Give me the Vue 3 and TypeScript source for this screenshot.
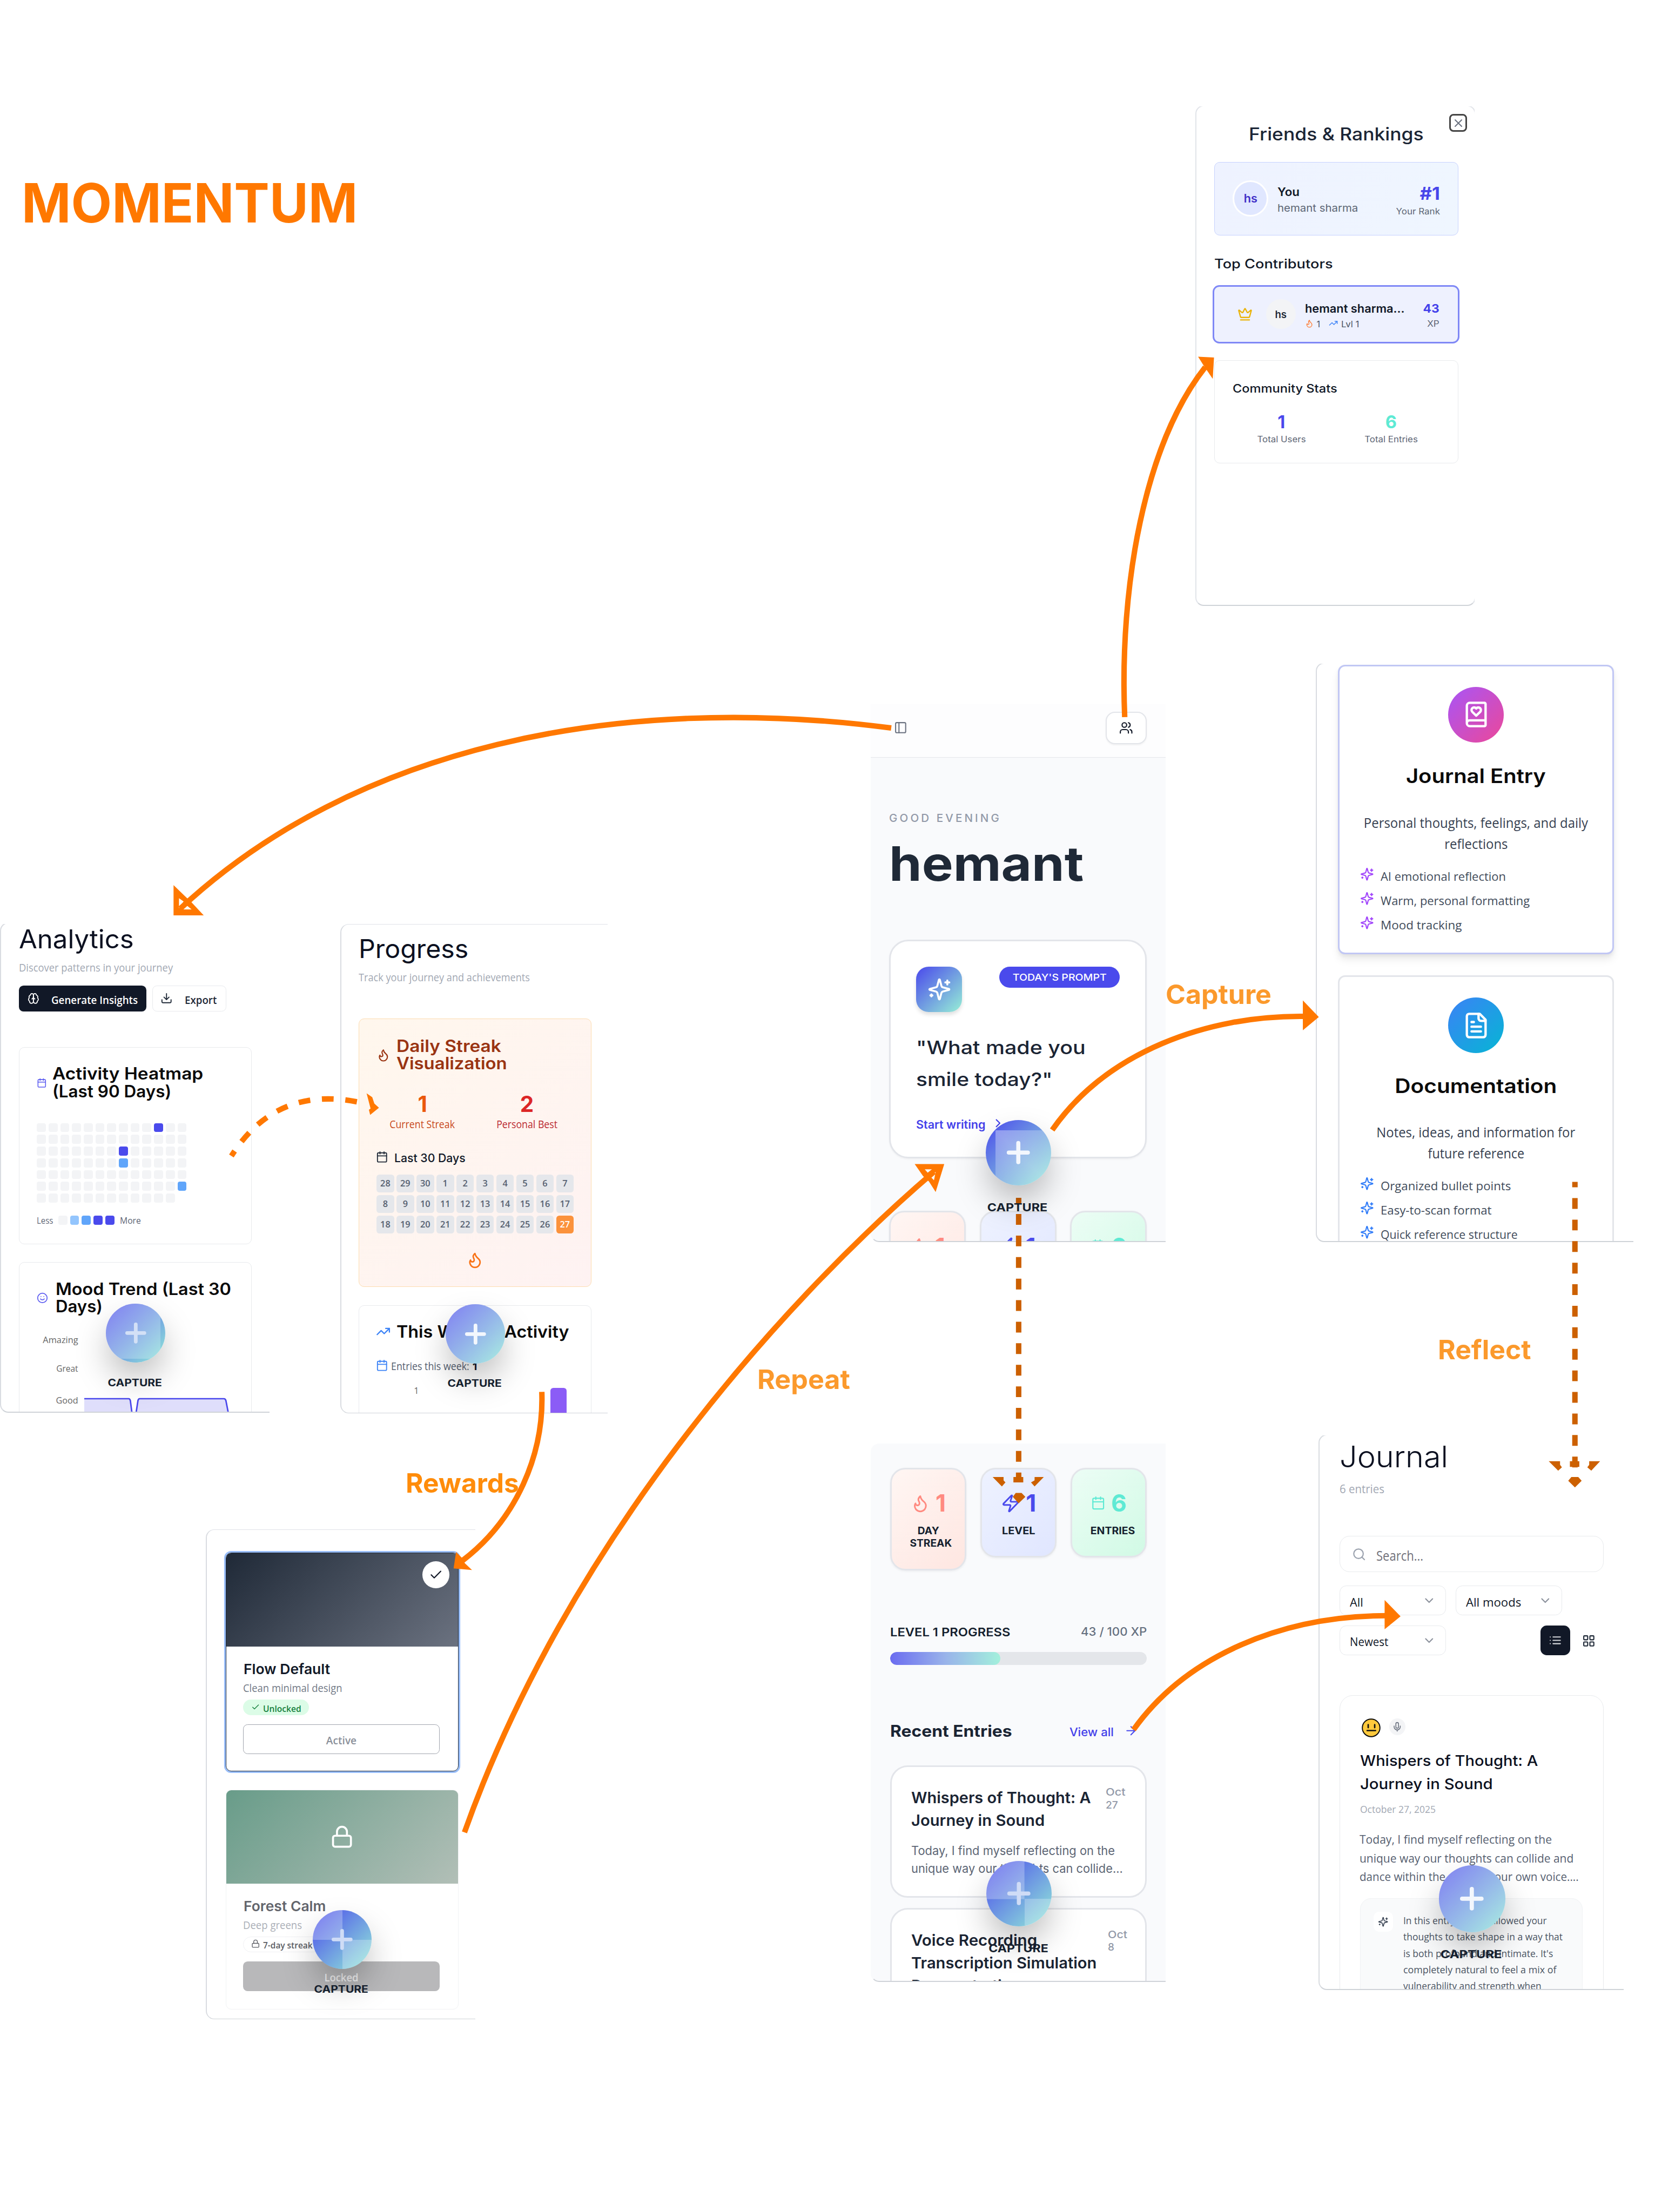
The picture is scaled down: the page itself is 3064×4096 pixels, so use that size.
<script setup lang="ts">
import { h } from 'vue'
import type { Directive } from 'vue'

/* Stroke icons on a 24 x 24 grid */
const glyphs: Record<string, string> = {
  sparkles:
    '<path d="M9.937 15.5A2 2 0 0 0 8.5 14.063l-6.135-1.582a.5.5 0 0 1 0-.962L8.5 9.936A2 2 0 0 0 9.937 8.5l1.582-6.135a.5.5 0 0 1 .963 0L14.063 8.5A2 2 0 0 0 15.5 9.937l6.135 1.581a.5.5 0 0 1 0 .964L15.5 14.063a2 2 0 0 0-1.437 1.437l-1.582 6.135a.5.5 0 0 1-.963 0z"/><path d="M20 3v4M22 5h-4M4 17v2M5 18H3"/>',
  flame:
    '<path d="M8.5 14.5A2.5 2.5 0 0 0 11 12c0-1.38-.5-2-1-3-1.072-2.143-.224-4.054 2-6 .5 2.5 2 4.9 4 6.5 2 1.6 3 3.5 3 5.5a7 7 0 1 1-14 0c0-1.153.433-2.294 1-3a2.5 2.5 0 0 0 2.5 2.5z"/>',
  zap: '<path d="M4 14a1 1 0 0 1-.78-1.63l9.9-10.2a.5.5 0 0 1 .86.46l-1.92 6.02A1 1 0 0 0 13 10h7a1 1 0 0 1 .78 1.63l-9.9 10.2a.5.5 0 0 1-.86-.46l1.92-6.02A1 1 0 0 0 11 14z"/>',
  calendar: '<path d="M8 2v4M16 2v4M3 10h18"/><rect x="3" y="4" width="18" height="18" rx="2"/>',
  users:
    '<path d="M16 21v-2a4 4 0 0 0-4-4H6a4 4 0 0 0-4 4v2"/><circle cx="9" cy="7" r="4"/><path d="M22 21v-2a4 4 0 0 0-3-3.87M16 3.13a4 4 0 0 1 0 7.75"/>',
  panel: '<rect x="3" y="3" width="18" height="18" rx="2"/><path d="M9 3v18"/>',
  crown:
    '<path d="M11.562 3.266a.5.5 0 0 1 .876 0L15.39 8.87a1 1 0 0 0 1.516.294L21.183 5.5a.5.5 0 0 1 .798.519l-2.834 10.246a1 1 0 0 1-.956.734H5.81a1 1 0 0 1-.957-.734L2.02 6.02a.5.5 0 0 1 .798-.519l4.276 3.664a1 1 0 0 0 1.516-.294z"/><path d="M5 21h14"/>',
  trend: '<path d="M22 7l-8.500 8.500-5-5L2 17"/><path d="M16 7h6v6"/>',
  brain:
    '<path d="M12 5a3 3 0 1 0-5.997.125 4 4 0 0 0-2.526 5.77 4 4 0 0 0 .556 6.588A4 4 0 1 0 12 18Z"/><path d="M12 5a3 3 0 1 1 5.997.125 4 4 0 0 1 2.526 5.77 4 4 0 0 1-.556 6.588A4 4 0 1 1 12 18Z"/><path d="M15 13a4.500 4.500 0 0 1-3-4 4.500 4.500 0 0 1-3 4"/>',
  download: '<path d="M21 15v4a2 2 0 0 1-2 2H5a2 2 0 0 1-2-2v-4"/><path d="m7 10 5 5 5-5M12 15V3"/>',
  smile: '<circle cx="12" cy="12" r="10"/><path d="M8 14s1.500 2 4 2 4-2 4-2M9 9h.01M15 9h.01"/>',
  lock: '<rect x="3" y="11" width="18" height="11" rx="2"/><path d="M7 11V7a5 5 0 0 1 10 0v4"/>',
  check: '<path d="M20 6 9 17l-5-5"/>',
  book: '<path d="M16 8.200A2.220 2.220 0 0 0 13.800 6c-.8 0-1.400.3-1.800.9-.4-.6-1-.9-1.800-.9A2.220 2.220 0 0 0 8 8.200c0 .6.3 1.200.7 1.600A226.652 226.652 0 0 0 12 13a404 404 0 0 0 3.300-3.100 2.413 2.413 0 0 0 .7-1.700"/><path d="M4 19.500v-15A2.500 2.500 0 0 1 6.500 2H19a1 1 0 0 1 1 1v18a1 1 0 0 1-1 1H6.500a1 1 0 0 1 0-5H20"/>',
  file: '<path d="M15 2H6a2 2 0 0 0-2 2v16a2 2 0 0 0 2 2h12a2 2 0 0 0 2-2V7Z"/><path d="M14 2v4a2 2 0 0 0 2 2h4M10 9H8M16 13H8M16 17H8"/>',
  search: '<circle cx="11" cy="11" r="8"/><path d="m21 21-4.300-4.300"/>',
  down: '<path d="m6 9 6 6 6-6"/>',
  right: '<path d="m9 18 6-6-6-6"/>',
  arrow: '<path d="M5 12h14M12 5l7 7-7 7"/>',
  list: '<path d="M3 12h.01M3 18h.01M3 6h.01M8 12h13M8 18h13M8 6h13"/>',
  grid: '<rect x="3" y="3" width="7" height="7" rx="1"/><rect x="14" y="3" width="7" height="7" rx="1"/><rect x="14" y="14" width="7" height="7" rx="1"/><rect x="3" y="14" width="7" height="7" rx="1"/>',
  mic: '<path d="M12 2a3 3 0 0 0-3 3v7a3 3 0 0 0 6 0V5a3 3 0 0 0-3-3Z"/><path d="M19 10v2a7 7 0 0 1-14 0v-2M12 19v3"/>',
  close: '<path d="M18 6 6 18M6 6l12 12"/>',
  plus: '<path d="M5 12h14M12 5v14"/>',
}

const Icon = (p: { n: string }) => h('svg', { class: 'icon', viewBox: '0 0 24 24', innerHTML: glyphs[p.n] })
Icon.props = ['n']

/* Stretches a single line of text to the given width; .track spreads the letters instead */
const pen = document.createElement('canvas').getContext('2d')!
const vFit: Directive<HTMLElement, number> = {
  mounted(el, { value, modifiers }) {
    const cs = getComputedStyle(el)
    const text = (el.textContent ?? '').trim()
    const size = parseFloat(cs.fontSize)
    pen.font = `${cs.fontWeight} ${size}px ${cs.fontFamily}`
    const natural = pen.measureText(text).width
    const target = value + size * 0.1
    if ((modifiers as Record<string, boolean>).track) el.style.letterSpacing = `${(target - natural) / (text.length - 1)}px`
    else el.style.transform = `scaleX(${target / natural})`
  },
}

const stats = [
  { kind: 'streak', icon: 'flame', value: '1', label: [['DAY', 49], ['STREAK', 98]] },
  { kind: 'level', icon: 'zap', value: '1', label: [['LEVEL', 77]] },
  { kind: 'entries', icon: 'calendar', value: '6', label: [['ENTRIES', 104]] },
] as { kind: string; icon: string; value: string; label: [string, number][] }[]

const heat = Array.from({ length: 7 * 13 - 1 }, (_, i) => {
  const row = Math.floor(i / 13)
  const col = i % 13
  if ((row === 0 && col === 10) || (row === 2 && col === 7)) return 'h4'
  if ((row === 3 && col === 7) || (row === 5 && col === 12)) return 'h2'
  return 'h0'
})

const days = [28, 29, 30, ...Array.from({ length: 27 }, (_, i) => i + 1)]

const kinds = [
  {
    id: 'journal', icon: 'book', title: 'Journal Entry', tw: 329,
    text: [['Personal thoughts, feelings, and daily', 532], ['reflections', 148]] as [string, number][],
    items: [['AI emotional reflection', 296], ['Warm, personal formatting', 353], ['Mood tracking', 191]] as [string, number][],
  },
  {
    id: 'docs', icon: 'file', title: 'Documentation', tw: 382,
    text: [['Notes, ideas, and information for', 471], ['future reference', 227]] as [string, number][],
    items: [['Organized bullet points', 308], ['Easy-to-scan format', 262], ['Quick reference structure', 324]] as [string, number][],
  },
]
</script>

<template>
  <div class="stage">
    <h1 class="tx label momentum" v-fit="789">MOMENTUM</h1>

    <!-- Friends & Rankings -->
    <section class="panel friends">
      <button class="close"><Icon n="close" /></button>
      <h2 class="tx c f-title" v-fit="413">Friends &amp; Rankings</h2>
      <div class="you row">
        <span class="avatar big">hs</span>
        <div class="col you-name">
          <p class="tx y1" v-fit="50">You</p>
          <p class="tx y2" v-fit="190">hemant sharma</p>
        </div>
        <div class="col you-rank">
          <p class="tx r y3" v-fit="44">#1</p>
          <p class="tx r y4" v-fit="103">Your Rank</p>
        </div>
      </div>
      <h3 class="tx f-top" v-fit="280">Top Contributors</h3>
      <div class="leader row">
        <Icon n="crown" class="crown" />
        <span class="avatar small">hs</span>
        <div class="col l-name">
          <p class="tx l1" v-fit="235">hemant sharma...</p>
          <div class="row">
            <Icon n="flame" class="l-flame" /><p class="tx l2 l-num">1</p>
            <Icon n="trend" class="l-trend" /><p class="tx l2" v-fit="41">Lvl 1</p>
          </div>
        </div>
        <div class="col l-xp">
          <p class="tx r l3" v-fit="36">43</p>
          <p class="tx r l4" v-fit="27">XP</p>
        </div>
      </div>
      <div class="community col">
        <h3 class="tx cm-title" v-fit="247">Community Stats</h3>
        <div class="cm row">
          <div class="col"><p class="tx c cm-num">1</p><p class="tx c cm-lab" v-fit="114">Total Users</p></div>
          <div class="col"><p class="tx c cm-num teal">6</p><p class="tx c cm-lab" v-fit="125">Total Entries</p></div>
        </div>
      </div>
    </section>

    <!-- Home, top of the page -->
    <section class="panel home home-a">
      <header class="bar row">
        <Icon n="panel" class="toggle" />
        <button class="people"><Icon n="users" /></button>
      </header>
      <p class="tx greet" v-fit.track="260">GOOD EVENING</p>
      <h1 class="tx name" v-fit="453">hemant</h1>
      <div class="prompt col">
        <div class="row">
          <span class="tile"><Icon n="sparkles" /></span>
          <span class="today"><span class="tx c" v-fit="222">TODAY'S PROMPT</span></span>
        </div>
        <p class="tx q q1" v-fit="400">"What made you</p>
        <p class="tx q q2" v-fit="321">smile today?"</p>
        <div class="row">
          <p class="tx start" v-fit="163">Start writing</p>
          <Icon n="right" class="go" />
        </div>
      </div>
      <div class="stats row">
        <div v-for="s in stats" :key="s.kind" class="stat col" :class="s.kind">
          <div class="row head"><Icon :n="s.icon" /><p class="tx num">{{ s.value }}</p></div>
          <p v-for="l in s.label" :key="l[0]" class="tx c lab" v-fit="l[1]">{{ l[0] }}</p>
        </div>
      </div>
      <div class="fab fab-a"><span class="disc"><Icon n="plus" /></span><p class="tx c" v-fit="141">CAPTURE</p></div>
    </section>

    <!-- Home, scrolled down -->
    <section class="panel home home-b">
      <div class="stats row">
        <div v-for="s in stats" :key="s.kind" class="stat col" :class="s.kind">
          <div class="row head"><Icon :n="s.icon" /><p class="tx num">{{ s.value }}</p></div>
          <p v-for="l in s.label" :key="l[0]" class="tx c lab" v-fit="l[1]">{{ l[0] }}</p>
        </div>
      </div>
      <div class="row between">
        <p class="tx lp" v-fit="284">LEVEL 1 PROGRESS</p>
        <p class="tx r xp" v-fit="155">43 / 100 XP</p>
      </div>
      <div class="meter"><span></span></div>
      <div class="row">
        <h2 class="tx recent" v-fit="287">Recent Entries</h2>
        <p class="tx r viewall" v-fit="103">View all</p>
        <Icon n="arrow" class="va-arrow" />
      </div>
      <article class="entry col e1">
        <div class="row">
          <div class="col e-title">
            <p class="tx et et1" v-fit="425">Whispers of Thought: A</p>
            <p class="tx et et2" v-fit="315">Journey in Sound</p>
          </div>
          <div class="col"><p class="tx ed ed1" v-fit="45">Oct</p><p class="tx ed ed2" v-fit="27">27</p></div>
        </div>
        <p class="tx eb eb1" v-fit="483">Today, I find myself reflecting on the</p>
        <p class="tx eb eb2" v-fit="502">unique way our thoughts can collide...</p>
      </article>
      <article class="entry col e2">
        <div class="row">
          <div class="col e-title">
            <p class="tx et et1" v-fit="297">Voice Recording</p>
            <p class="tx et et2" v-fit="439">Transcription Simulation</p>
            <p class="tx et et2" v-fit="257">Demonstration</p>
          </div>
          <div class="col"><p class="tx ed ed1" v-fit="44">Oct</p><p class="tx ed ed2">8</p></div>
        </div>
      </article>
      <div class="fab fab-b"><span class="disc"><Icon n="plus" /></span><p class="tx c" v-fit="140">CAPTURE</p></div>
    </section>

    <!-- Entry type picker -->
    <section class="panel kinds">
      <article v-for="k in kinds" :key="k.id" class="kind col" :class="k.id">
        <span class="round"><Icon :n="k.icon" /></span>
        <h2 class="tx c k-title" v-fit="k.tw">{{ k.title }}</h2>
        <p v-for="t in k.text" :key="t[0]" class="tx c k-text" v-fit="t[1]">{{ t[0] }}</p>
        <ul>
          <li v-for="t in k.items" :key="t[0]" class="row"><Icon n="sparkles" /><p class="tx" v-fit="t[1]">{{ t[0] }}</p></li>
        </ul>
      </article>
    </section>

    <!-- Analytics -->
    <section class="panel analytics">
      <h1 class="tx page-title" v-fit="268">Analytics</h1>
      <p class="tx page-sub" v-fit="365">Discover patterns in your journey</p>
      <div class="row actions">
        <button class="row gen"><Icon n="brain" /><span class="tx" v-fit="204">Generate Insights</span></button>
        <button class="row exp"><Icon n="download" /><span class="tx" v-fit="74">Export</span></button>
      </div>
      <div class="card heat col">
        <div class="row">
          <Icon n="calendar" class="cal" />
          <div class="col">
            <h2 class="tx ct ct1" v-fit="356">Activity Heatmap</h2>
            <h2 class="tx ct ct2" v-fit="280">(Last 90 Days)</h2>
          </div>
        </div>
        <div class="cells"><i v-for="(c, i) in heat" :key="i" :class="c"></i></div>
        <div class="row legend">
          <p class="tx less" v-fit="37">Less</p>
          <i class="h0"></i><i class="h1"></i><i class="h2"></i><i class="h4"></i><i class="h4"></i>
          <p class="tx more" v-fit="48">More</p>
        </div>
      </div>
      <div class="card mood col">
        <div class="row">
          <Icon n="smile" class="face" />
          <div class="col">
            <h2 class="tx ct ct1" v-fit="415">Mood Trend (Last 30</h2>
            <h2 class="tx ct ct2" v-fit="108">Days)</h2>
          </div>
        </div>
        <div class="row">
          <div class="col axis">
            <p class="tx r ax1" v-fit="82">Amazing</p>
            <p class="tx r ax2" v-fit="50">Great</p>
            <p class="tx r ax3" v-fit="51">Good</p>
          </div>
          <svg class="area" viewBox="0 0 350 60">
            <path d="M0 9H106Q109 9 110 14L116 60H0Z M121 60L128 14Q129 9 132 9H333Q337 9 338 14L347 60Z" class="fill" />
            <path d="M0 9H106Q109 9 110 14L116 60M121 60L128 14Q129 9 132 9H333Q337 9 338 14L347 60" class="line" />
          </svg>
        </div>
      </div>
      <div class="fab fab-d"><span class="disc"><Icon n="plus" /></span><p class="tx c" v-fit="127">CAPTURE</p></div>
    </section>

    <!-- Progress -->
    <section class="panel progress">
      <h1 class="tx page-title" v-fit="256">Progress</h1>
      <p class="tx page-sub" v-fit="406">Track your journey and achievements</p>
      <div class="card streak-card col">
        <div class="row">
          <Icon n="flame" class="sf" />
          <div class="col">
            <h2 class="tx ct ct1" v-fit="246">Daily Streak</h2>
            <h2 class="tx ct ct2" v-fit="260">Visualization</h2>
          </div>
        </div>
        <div class="row duo">
          <div class="col"><p class="tx c dn">1</p><p class="tx c dl" v-fit="153">Current Streak</p></div>
          <div class="col best"><p class="tx c dn">2</p><p class="tx c dl" v-fit="143">Personal Best</p></div>
        </div>
        <div class="row"><Icon n="calendar" class="cal30" /><p class="tx last30" v-fit="167">Last 30 Days</p></div>
        <div class="month"><span v-for="(d, i) in days" :key="i" :class="{ now: i === 29 }">{{ d }}</span></div>
        <Icon n="flame" class="mid-flame" />
      </div>
      <div class="card week col">
        <div class="row"><Icon n="trend" class="wt" /><h2 class="tx ct w-title" v-fit="408">This Week's Activity</h2></div>
        <div class="row"><Icon n="calendar" class="wc" /><p class="tx w-sub" v-fit="184">Entries this week:</p><p class="tx w-one">1</p></div>
        <div class="row"><p class="tx w-ax">1</p><span class="w-bar"></span></div>
      </div>
      <div class="fab fab-e"><span class="disc"><Icon n="plus" /></span><p class="tx c" v-fit="127">CAPTURE</p></div>
    </section>

    <!-- Rewards -->
    <section class="panel rewards">
      <article class="theme col flow">
        <div class="cover row"><span class="tick"><Icon n="check" /></span></div>
        <h3 class="tx th-title" v-fit="203">Flow Default</h3>
        <p class="tx th-sub" v-fit="234">Clean minimal design</p>
        <span class="chip row"><Icon n="check" /><span class="tx" v-fit="89">Unlocked</span></span>
        <button class="wide"><span class="tx c" v-fit="70">Active</span></button>
      </article>
      <article class="theme col forest">
        <div class="cover row"><Icon n="lock" class="big-lock" /></div>
        <h3 class="tx th-title" v-fit="193">Forest Calm</h3>
        <p class="tx th-sub" v-fit="138">Deep greens</p>
        <span class="chip row"><Icon n="lock" /><span class="tx" v-fit="116">7-day streak</span></span>
        <button class="wide"><span class="tx c" v-fit="79">Locked</span></button>
      </article>
      <div class="fab fab-f"><span class="disc"><Icon n="plus" /></span><p class="tx c" v-fit="127">CAPTURE</p></div>
    </section>

    <!-- Journal -->
    <section class="panel journal-list">
      <h1 class="tx j-title" v-fit="252">Journal</h1>
      <p class="tx j-sub" v-fit="104">6 entries</p>
      <div class="search row"><Icon n="search" /><p class="tx" v-fit="109">Search...</p></div>
      <div class="row filters f1">
        <div class="select row"><p class="tx" v-fit="29">All</p><Icon n="down" /></div>
        <div class="select row"><p class="tx" v-fit="129">All moods</p><Icon n="down" /></div>
      </div>
      <div class="row filters f2">
        <div class="select row"><p class="tx" v-fit="89">Newest</p><Icon n="down" /></div>
        <button class="list-btn"><Icon n="list" /></button>
        <Icon n="grid" class="grid-icon" />
      </div>
      <article class="j-card col">
        <div class="row">
          <svg class="emoji" viewBox="0 0 45 45">
            <circle cx="22.500" cy="22.500" r="21" fill="#ffc93c" stroke="#0a0a0a" stroke-width="2.500" />
            <path d="M15.500 15v7M31 15v7M13 29h20" stroke="#111" stroke-width="3.500" stroke-linecap="round" />
          </svg>
          <span class="mic"><Icon n="mic" /></span>
        </div>
        <h2 class="tx jt jt1" v-fit="421">Whispers of Thought: A</h2>
        <h2 class="tx jt jt2" v-fit="313">Journey in Sound</h2>
        <p class="tx jd" v-fit="178">October 27, 2025</p>
        <p class="tx jb jb1" v-fit="456">Today, I find myself reflecting on the</p>
        <p class="tx jb jb2" v-fit="508">unique way our thoughts can collide and</p>
        <p class="tx jb jb2" v-fit="520">dance within the space of our own voice....</p>
        <div class="insight row">
          <span class="spark"><Icon n="sparkles" /></span>
          <div class="col">
            <p class="tx ji ji1" v-fit="340">In this entry, you've allowed your</p>
            <p class="tx ji" v-fit="378">thoughts to take shape in a way that</p>
            <p class="tx ji" v-fit="355">is both profound and intimate. It's</p>
            <p class="tx ji" v-fit="363">completely natural to feel a mix of</p>
            <p class="tx ji" v-fit="327">vulnerability and strength when</p>
          </div>
        </div>
      </article>
      <div class="fab fab-g"><span class="disc"><Icon n="plus" /></span><p class="tx c" v-fit="144">CAPTURE</p></div>
    </section>

    <p class="tx label cap-label" v-fit="246">Capture</p>
    <p class="tx label repeat" v-fit="215">Repeat</p>
    <p class="tx label reflect" v-fit="216">Reflect</p>
    <p class="tx label reward-label" v-fit="264">Rewards</p>

    <!-- Connectors between the screens -->
    <svg class="wires" viewBox="0 0 3948 5277">
      <g class="solid">
        <path d="M2683 1711C2670 1400 2730 1060 2875 876" />
        <path d="M2126 1737C1470 1651 842 1784 430 2168" />
        <path d="M1292.500 3321C1298 3470 1232 3625 1104 3723" />
        <path d="M1108 4372C1350 3690 1850 3120 2228 2796" />
        <path d="M2510 2696C2640 2510 2880 2422 3112 2425" />
        <path d="M2704 4127C2830 3950 3060 3855 3308 3855" />
        <path d="M552 2758C620 2650 720 2600 862 2631" class="dash" />
      </g>
      <g class="heads">
        <path d="M2858 851L2896 853L2893 904L2878 882L2870 870Z" />
        <path fill-rule="evenodd" d="M414 2112L444 2141L455 2151L486 2184H414ZM427 2143V2167L438 2151ZM445 2160L434 2170H457Z" />
        <path d="M1088 3703L1082 3742L1126 3746L1109 3730L1102 3717Z" />
        <path fill-rule="evenodd" d="M2182 2777.500H2252.500L2232 2844L2216 2819L2202 2806ZM2206 2790L2213 2798L2223 2790ZM2219 2807L2228 2816L2232 2796Z" />
        <path d="M3108 2387L3146 2426.500L3108 2458Z" />
        <path d="M3303 3817.500L3341 3856.500L3303 3887.500Z" />
        <path d="M874.500 2608.500L888 2618L893 2633L904 2643L883 2660L880 2648L884 2645Z" />
      </g>
      <g class="dark">
        <path d="M2430 2858V3524" class="drop" />
        <path d="M3757 2820V3502" class="drop" />
        <path d="M2368 3524H2394V3532L2398.500 3537L2390 3546.500ZM2417.500 3524H2441V3537H2417.500ZM2490 3524H2468V3532L2459.500 3537L2468 3546.500ZM2416 3571.500L2423 3562H2437L2446 3571.500L2430 3587Z" />
        <path d="M3694.500 3486.500H3721.500V3495L3726 3501L3717 3509ZM3745 3486.500H3767.500V3500H3745ZM3817 3486.500H3791V3495L3786.500 3501L3796 3509ZM3741 3533L3748.500 3524H3765L3773 3533L3757 3549Z" />
      </g>
    </svg>
  </div>
</template>

<style>
html,
body {
  margin: 0;
  background: #fff;
}
.icon {
  display: block;
  flex: none;
  width: 24px;
  height: 24px;
  fill: none;
  stroke: currentColor;
  stroke-width: 2;
  stroke-linecap: round;
  stroke-linejoin: round;
}
</style>

<style scoped>
.stage {
  position: relative;
  width: 3948px;
  height: 5277px;
  overflow: hidden;
  zoom: 0.77609;
  background: #fff;
  font-family: Inter, "Liberation Sans", sans-serif;
  color: #111827;
}
.stage *,
.stage *::before,
.stage *::after {
  box-sizing: border-box;
}
h1, h2, h3, p, ul { margin: 0; padding: 0; font-weight: 400; }
ul { list-style: none; }
button { font: inherit; padding: 0; background: none; border: 0; color: inherit; }

/* Text sits on a baseline: --y is the distance from the previous item down to it */
.tx {
  --drop: calc(0.236em + 1.8px);
  display: block;
  flex: none;
  height: 1.2em;
  line-height: 1.2;
  margin-top: calc(var(--y, 0px) - 1.2em + var(--drop));
  margin-bottom: calc(var(--drop) * -1);
  white-space: nowrap;
  transform-origin: left center;
}
.c { text-align: center; transform-origin: center; }
.r { text-align: right; transform-origin: right center; }
.row { display: flex; align-items: flex-start; }
/* icons never stretch a text row */
.row > .icon { margin-bottom: -60px; }
.col { display: flex; flex-direction: column; }
.between { justify-content: space-between; }
.teal { color: #5eead4 !important; }

.panel {
  position: absolute;
  display: flex;
  flex-direction: column;
  overflow: hidden;
  background: #fff;
}
.panel::after {
  content: "";
  position: absolute;
  inset: -2.6px -30px 0 0;
  border: 2.6px solid #d9dce1;
  border-bottom: 3px solid #cfd3d8;
  border-radius: 20px;
  pointer-events: none;
}
.card { border: 2px solid #e8eaed; border-radius: 13px; background: #fff; flex: none; }

/* labels */
.label { position: absolute; font-weight: 700; font-size: 64px; color: #fb992c; }
.momentum { left: 51px; top: 529px; font-size: 130px; color: #ff7800; }
.cap-label { left: 2781px; top: 2395px; }
.repeat { left: 1806px; top: 3314px; }
.reflect { left: 3430px; top: 3243px; }
.reward-label { left: 968px; top: 3561px; color: #ff8c0a; }

.wires { position: absolute; left: 0; top: 0; width: 3948px; height: 5277px; pointer-events: none; }
.solid path { fill: none; stroke: #ff7800; stroke-width: 13; }
.solid .dash { stroke-dasharray: 28 28; stroke-dashoffset: 14; }
.heads path { fill: #ff7800; }
.dark path { fill: #cc6000; }
.dark .drop { fill: none; stroke: #cc6000; stroke-width: 13; stroke-dasharray: 25.7 25.7; stroke-dashoffset: 12.8; }

/* friends */
.friends { left: 2852px; top: 254px; width: 665px; height: 1192px; padding: 0 38.5px 0 44.5px; }
.friends::after { right: -2.6px; border-width: 2.6px; border-color: #e1e4e9; border-bottom-color: #cfd3d8; }
.close { position: absolute; left: 605px; top: 18px; width: 43px; height: 50px; height: 43px; border: 3.9px solid #444; border-radius: 10px; display: flex; align-items: center; justify-content: center; color: #6b7280; }
.close .icon { width: 31px; height: 31px; }
.f-title { --y: 80px; font-size: 41.500px; font-weight: 550; color: #1b2535; }
.you { margin-top: 53px; height: 175px; border: 2px solid #c7d2fe; border-radius: 13px; background: linear-gradient(100deg, #eef2ff, #eff6ff); padding: 0 42px 0 43px; }
.avatar { flex: none; border-radius: 50%; display: flex; align-items: center; justify-content: center; font-weight: 600; }
.big { width: 85px; height: 86px; margin-top: 42px; background: #e0e7ff; border: 3.9px solid #fff; color: #4030c8; font-size: 28px; }
.you-name { margin-left: 21px; }
.y1 { --y: 77.5px; font-size: 28px; font-weight: 600; }
.y2 { --y: 39px; font-size: 24.5px; color: #5d6675; }
.you-rank { margin-left: auto; }
.y3 { --y: 87px; font-size: 42px; font-weight: 700; color: #4845ea; }
.y4 { --y: 35px; font-size: 21px; color: #5d6675; }
.f-top { --y: 78px; font-size: 30.5px; font-weight: 550; }
.leader { margin: 40px -3.5px 0; height: 140px; border: 4px solid #7f88f6; border-radius: 16px; background: #eef1fe; padding: 0 45px 0 55px; }
.crown { width: 36px; height: 36px; margin-top: 48px; color: #eab308; }
.small { width: 71px; height: 71px; margin: 30px 0 0 32px; background: #f3f4f6; color: #1f2937; font-size: 24px; }
.l-name { margin-left: 22px; }
.l1 { --y: 61px; font-size: 28px; font-weight: 600; }
.l-flame { width: 21px; height: 21px; margin-top: 17px; color: #ff7a30; }
.l2 { --y: 34.6px; font-size: 21px; color: #4b5563; }
.l-num { width: 18px; margin-left: 7px; }
.l-trend { width: 22px; height: 22px; margin: 16px 8px 0 11px; color: #3b82f6; }
.l-xp { margin-left: auto; }
.l3 { --y: 60.5px; font-size: 28px; font-weight: 700; color: #4340ea; }
.l4 { --y: 34px; font-size: 21px; color: #5d6675; }
.community { margin-top: 40px; height: 246px; border: 2px solid #e8eaed; border-radius: 13px; }
.cm-title { --y: 74px; margin-left: 43px; font-size: 27.500px; font-weight: 550; }
.cm { margin: 0 28px; }
.cm .col { flex: 1; }
.cm-num { --y: 85px; font-size: 42px; font-weight: 700; color: #4a48ec; }
.cm-lab { --y: 34px; font-size: 21px; color: #5d6675; }

/* home */
.home { background: #f9fafc; left: 2077px; width: 704px; padding: 0 45px 0 46px; border-radius: 20px 0 0 20px; }
.home::after { border-left-color: transparent; border-top-color: transparent; }
.home-a { top: 1680px; height: 1283px; border-radius: 0 0 0 20px; padding-left: 44px; }
.bar { flex: none; height: 128px; margin: 0 -45px 0 -44px; background: #fdfdfe; border-bottom: 2px solid #e5e7eb; }
.toggle { width: 32px; height: 32px; margin: 40px 0 0 55px; color: #6b7280; }
.people { margin: 18px 45px 0 auto; width: 99px; height: 77px; border: 2.6px solid #e3e5ea; border-radius: 22px; background: #fff; display: flex; align-items: center; justify-content: center; box-shadow: 0 2px 4px rgba(0, 0, 0, 0.05); }
.people .icon { width: 33px; height: 33px; }
.greet { --y: 153px; font-size: 26.5px; font-weight: 500; color: #9299a8; }
.name { --y: 139px; font-size: 114px; font-weight: 700; color: #1f2937; }
.prompt { flex: none; margin-top: 142.500px; height: 521px; border: 3.9px solid #e3e5ea; border-radius: 46px; background: #fff; padding: 60px 61px 0 61px; box-shadow: 0 2px 4px rgba(0, 0, 0, 0.04); }
.tile { width: 109px; height: 109px; border-radius: 30px; background: linear-gradient(135deg, #4a48ec, #96efd6); color: #fff; display: flex; align-items: center; justify-content: center; box-shadow: 0 6px 10px rgba(0, 0, 0, 0.12); }
.tile .icon { width: 57px; height: 57px; }
.today { margin-left: auto; width: 288px; height: 50px; border-radius: 25px; background: #4a4aec; color: #fff; }
.today .tx { --y: 32.7px; font-size: 22.5px; font-weight: 500; }
.q { font-size: 44.5px; color: #1a2433; font-weight: 500; }
.q1 { --y: 98.7px; }
.q2 { --y: 76px; }
.start { --y: 101px; width: 163px; font-size: 27px; font-weight: 600; color: #4340ea; }
.go { width: 33px; height: 33px; margin: 73.500px 0 0 15px; color: #4340ea; }
.stats { flex: none; gap: 33px; }
.home-a .stats { margin-top: 126px; }
.home-b .stats { margin-top: 58px; height: 245px; }
.stat { flex: 1; height: 214px; border: 3.9px solid #e3e5ea; border-radius: 36px; box-shadow: 0 2px 5px rgba(0, 0, 0, 0.05); }
.head { justify-content: center; gap: 14px; height: 100px; }
.head .icon { width: 46px; height: 46px; margin-top: 58px; }
.num { --y: 100px; font-size: 57px; font-weight: 700; }
.lab { --y: 53px; font-size: 24px; font-weight: 700; color: #151f2e; }
.lab + .lab { --y: 30px; margin-left: 14px; }
.streak { height: 245px; background: linear-gradient(135deg, #fff6f3, #fee6e1); color: #ff8a80; }
.level { background: linear-gradient(135deg, #eef2ff, #e0e6ff); color: #4a4aec; }
.entries { background: linear-gradient(135deg, #ecfdf5, #d1fae5); color: #5eead4; }
.entries .icon { width: 34px; height: 34px; margin-top: 63px; }
.entries .lab { margin-left: 20px; }
.home-b { top: 3444px; height: 1285px; }
.lp { --y: 155px; font-size: 28px; font-weight: 600; color: #151f2e; }
.xp { --y: 155px; font-size: 27.5px; font-weight: 500; color: #667080; }
.meter { flex: none; margin-top: 39px; height: 31px; border-radius: 16px; background: #e4e6ea; overflow: hidden; }
.meter span { display: block; width: 43%; height: 100%; border-radius: 16px; background: linear-gradient(90deg, #6b6cf0, #99b3ea 50%, #a3f0dc); }
.recent { --y: 171px; font-size: 38px; font-weight: 700; color: #1a2433; }
.viewall { --y: 169px; margin-left: auto; font-size: 27.5px; font-weight: 500; color: #4340ea; }
.va-arrow { width: 33px; height: 33px; margin: 141.500px 22px 0 24px; color: #4a4aec; }
.entry { flex: none; height: 315px; padding-left: 47px; border: 3.9px solid #e3e5ea; border-radius: 42px; background: #fff; }
.e1 { margin-top: 69.700px; }
.e2 { margin-top: 25px; }
.e-title { width: 464px; }
.e2 .e-title { width: 469px; }
.et { font-size: 36.5px; font-weight: 600; color: #1a2433; }
.et1 { --y: 84.500px; }
.et2 { --y: 54px; }
.ed { font-size: 24.5px; font-weight: 500; color: #9299a8; }
.ed1 { --y: 67.500px; }
.ed2 { --y: 30.500px; }
.eb { font-size: 29px; color: #5d6675; }
.eb1 { --y: 69px; }
.eb2 { --y: 43px; }

/* entry kinds */
.kinds { left: 3139px; top: 1583px; width: 757px; height: 1380px; padding-left: 53px; }
.kind { flex: none; width: 658px; height: 690px; align-items: center; border: 3.9px solid #c1c7f4; border-radius: 17px; background: #fff; }
.journal { margin-top: 3.500px; box-shadow: 0 14px 20px -2px rgba(0, 0, 0, 0.08), 0 4px 8px rgba(0, 0, 0, 0.05); }
.docs { margin-top: 51px; border: 3.9px solid #e3e5ea; }
.round { flex: none; width: 133px; height: 133px; margin-top: 48.500px; border-radius: 50%; display: flex; align-items: center; justify-content: center; color: #fff; background: linear-gradient(135deg, #a855f7, #ec4899); }
.docs .round { background: linear-gradient(135deg, #3b82f6, #06b6d4); }
.round .icon { width: 67px; height: 67px; }
.k-title { --y: 96px; font-size: 47.5px; font-weight: 600; color: #0a0a0a; }
.docs .k-title { --y: 93.500px; }
.k-text { --y: 50px; font: 400 32px/1.2 "Open Sans", sans-serif; --drop: calc(0.212em + 1.8px); color: #374151; }
.k-title + .k-text { --y: 106px; }
.kind ul { align-self: stretch; margin-top: 18px; padding-left: 49px; color: #a044fb; }
.docs ul { color: #2f7bf8; }
.kind li { height: 58px; }
.kind li .icon { width: 33px; height: 33px; margin-top: 28px; }
.kind li .tx { --y: 58px; --drop: calc(0.212em + 1.8px); margin-left: 16px; font: 400 29px/1.2 "Open Sans", sans-serif; color: #414b5a; }

/* shared page parts */
.page-title { font-size: 61px; font-weight: 400; color: #0b1020; }
.page-sub, .gen, .exp, .less, .more, .axis, .dl, .month, .w-sub, .w-one, .w-ax, .th-sub, .chip, .wide, .j-sub, .search, .select, .jd, .jb, .ji { font-family: "Open Sans", sans-serif; }
.page-sub, .gen .tx, .exp .tx, .less, .more, .axis .tx, .dl, .w-sub, .w-one, .w-ax, .th-sub, .chip .tx, .wide .tx, .j-sub, .search .tx, .select .tx, .jd, .jb, .ji { --drop: calc(0.212em + 1.8px); }
.page-sub { --y: 55.500px; font-size: 25.5px; color: #a2a8b3; }
.ct { font-size: 39.5px; font-weight: 600; color: #0a0a0a; }
.ct2 { --y: 41.500px; }

/* analytics */
.analytics { left: 0; top: 2204px; width: 643px; height: 1167px; padding-left: 45px; }
.analytics .page-title { --y: 57px; }
.actions { margin-top: 34.500px; gap: 14px; }
.gen, .exp { height: 63px; border-radius: 11px; font-weight: 600; font-size: 25px; }
.gen { width: 304px; background: #111827; color: #fff; padding-left: 21px; }
.exp { width: 177.500px; border: 2px solid #e8eaed; padding-left: 19px; color: #1f2937; }
.gen .icon { width: 28px; height: 28px; margin-top: 17.500px; }
.exp .icon { width: 29px; height: 29px; margin-top: 15px; }
.gen .tx { --y: 43px; margin-left: 28px; }
.exp .tx { --y: 41px; margin-left: 28px; }
.heat { width: 556px; height: 470px; margin-top: 84.400px; }
.cal { width: 24px; height: 24px; margin: 72px 14px 0 41px; color: #5b5bf0; }
.heat .ct1, .mood .ct1 { --y: 75.600px; }
.cells { display: grid; grid-template-columns: repeat(13, 21.500px); grid-auto-rows: 21.500px; gap: 6.500px; margin: 63px 0 0 41.500px; }
.cells i, .legend i { border-radius: 5px; }
.h0 { background: #f3f4f6; }
.h1 { background: #93c5fd; }
.h2 { background: #60a5fa; }
.h4 { background: #4a4aec; }
.legend { margin-left: 41.500px; gap: 6.500px; }
.legend i { width: 21.500px; height: 21.500px; margin-top: 31.500px; }
.less, .more { --y: 50.500px; font-size: 21px; color: #5d6675; }
.less { width: 45px; }
.more { margin-left: 7px; }
.mood { width: 556px; height: 420px; margin-top: 43px; }
.face { width: 27px; height: 27px; margin: 70.500px 18px 0 41px; color: #5b5bf0; }
.axis { width: 140px; font-size: 22px; color: #666; }
.ax1 { --y: 74px; }
.ax2 { --y: 68.500px; }
.ax3 { --y: 75.500px; }
.area { width: 350px; height: 60px; margin: 199px 0 0 15px; }
.area .fill { fill: #dfdefb; }
.area .line { fill: none; stroke: #4a48ec; stroke-width: 3.5; }

/* progress */
.progress { left: 812px; top: 2204px; width: 638px; height: 1168px; padding-left: 43px; }
.progress::after, .rewards::after { top: 0; border-top: 2px solid #dfe2e8; border-bottom-width: 2px; }
.progress .page-title { --y: 81px; }
.streak-card { width: 556px; height: 640px; margin-top: 90.300px; border-color: #fddcb0; background: linear-gradient(135deg, #fff7ed, #fef2f2); }
.streak-card .ct { color: #9a3412; }
.sf { width: 33px; height: 33px; margin: 68.500px 15px 0 42px; color: #9a3412; }
.streak-card .ct1 { --y: 76.700px; }
.duo { margin-left: 27px; color: #ea580c; }
.duo .col { width: 249px; }
.dn { --y: 102px; font-size: 52px; font-weight: 700; }
.dl { --y: 39px; font-size: 25.500px; color: #c84a1c; }
.best { color: #dc2626; }
.best .dl { color: #bb2a30; }
.cal30 { width: 29px; height: 29px; margin: 54.500px 15px 0 41px; color: #1f2937; }
.last30 { --y: 80px; font-size: 28px; font-weight: 500; }
.month { display: grid; grid-template-columns: repeat(10, 42px); grid-auto-rows: 42px; gap: 7px 5.600px; margin: 31.500px 0 0 42px; }
.month span { display: flex; align-items: center; justify-content: center; border-radius: 7px; background: #e5e7eb; color: #566070; font-size: 21px; font-weight: 600; }
.month .now { background: #fb923c; color: #fff; }
.mid-flame { width: 42px; height: 42px; margin: 43px auto 0; color: #f97316; }
.week { width: 556px; height: 400px; margin-top: 43px; }
.wt { width: 35px; height: 35px; margin: 44.500px 13px 0 41px; color: #3b82f6; }
.w-title { --y: 75.500px; }
.wc { width: 29px; height: 29px; margin: 53px 7px 0 41px; color: #3b82f6; }
.w-sub { --y: 77px; width: 186px; font-size: 25.500px; color: #566070; }
.w-one { --y: 77px; margin-left: 7px; font-size: 25px; font-weight: 700; }
.w-ax { --y: 57.500px; margin-left: 131px; width: 20px; font-size: 21px; color: #666; }
.w-bar { width: 39px; height: 90px; margin: 43.500px 0 0 306px; border-radius: 7px; background: #8b5cf6; }

/* rewards */
.rewards { left: 491px; top: 3649px; width: 643px; height: 1169px; padding-left: 47px; }
.theme { flex: none; width: 555.500px; overflow: hidden; border-radius: 13px; }
.flow { margin-top: 55px; height: 522px; border: 2px solid #1f2937; overflow: visible; box-shadow: 0 0 0 4px #98bdf8; }
.cover { flex: none; height: 223px; border-radius: 11px 11px 0 0; background: linear-gradient(135deg, #1f2937, #6b7280); }
.tick { width: 64px; height: 64px; margin: 20px 20px 0 auto; border-radius: 50%; background: #fff; display: flex; align-items: center; justify-content: center; }
.tick .icon { width: 34px; height: 34px; }
.th-title { --y: 65px; margin-left: 42px; font-size: 33.500px; font-weight: 600; }
.th-sub { --y: 42px; margin-left: 41px; font-size: 25.500px; color: #737a87; }
.chip { width: 157px; height: 37.500px; margin: 20px 0 0 41px; padding-left: 19px; border-radius: 19px; background: #dcfce7; color: #15803d; font-size: 21px; font-weight: 600; }
.chip .icon { width: 21px; height: 21px; margin-top: 8px; }
.chip .tx { --y: 28.500px; margin-left: 7px; }
.wide { flex: none; width: 469px; height: 71px; margin: 21px 0 0 41px; border: 2px solid #a1a5ae; border-radius: 11px; font-size: 25px; font-weight: 600; color: #8a8f99; }
.wide .tx { --y: 22px; }
.forest { margin-top: 44.700px; height: 524px; border: 2px solid #f1f2f4; }
.forest .cover { height: 224px; margin: -2px -2px 0; justify-content: center; background: linear-gradient(135deg, #689c89, #b2bfb7); }
.big-lock { width: 57px; height: 57px; margin-top: 84px; color: #fff; }
.forest .th-title { color: #63656c; }
.forest .th-sub { color: #abafb7; }
.forest .chip { width: 186px; background: #fff; border: 2px solid #f0f1f3; color: #5b5d64; padding-left: 18px; }
.forest .chip .icon { margin-top: 5px; }
.forest .chip .tx { --y: 26.500px; }
.forest .wide { border: 0; background: #b8b8ba; color: #f1f1f2; }

/* journal list */
.journal-list { left: 3145px; top: 3425px; width: 728px; height: 1323px; padding-left: 51px; }
.j-title { --y: 74.500px; font-size: 70px; font-weight: 350; color: #0b1020; margin-left: -1px; }
.j-sub { --y: 62px; font-size: 29px; color: #a2a8b3; }
.search { flex: none; margin-top: 102.500px; width: 629.500px; height: 87.500px; border: 2px solid #e8eaed; border-radius: 24px; }
.search .icon { width: 34px; height: 34px; margin: 26px 24px 0 28px; color: #9ca3af; }
.search .tx { --y: 57px; font-size: 32px; color: #71717a; }
.filters { flex: none; height: 71px; }
.f1 { margin-top: 32px; gap: 23.500px; }
.f2 { margin-top: 24.300px; }
.select { width: 253.500px; height: 71px; border: 2px solid #e8eaed; border-radius: 16px; padding: 0 23px; justify-content: space-between; }
.select .tx { --y: 46px; font-size: 28.500px; }
.select .icon { width: 33px; height: 33px; margin-top: 18px; color: #8b919c; }
.list-btn { width: 71px; height: 71px; margin-left: 225.500px; border-radius: 15px; background: #111827; color: #d5d7db; display: flex; align-items: center; justify-content: center; }
.list-btn .icon, .grid-icon { width: 32px; height: 32px; }
.grid-icon { margin: 20px 0 0 28.500px; color: #1f2937; }
.j-card { flex: none; width: 629.500px; height: 800px; margin-top: 95.500px; border: 2px solid #e8eaed; border-radius: 32px; }
.emoji { width: 45px; height: 45px; margin: 54px 0 0 51px; }
.mic { width: 39px; height: 40px; margin: 54px 0 0 20.500px; border-radius: 50%; background: #f3f4f6; color: #6b7280; display: flex; align-items: center; justify-content: center; }
.mic .icon { width: 25px; height: 25px; }
.jt { margin-left: 47px; font-size: 35.500px; font-weight: 500; color: #0b1020; }
.jt1 { --y: 66.700px; }
.jt2 { --y: 55.500px; }
.jd { --y: 57px; margin-left: 47px; font-size: 24.500px; color: #a2a8b3; }
.jb { margin-left: 46px; font-size: 28.500px; color: #566070; }
.jb1 { --y: 72.500px; }
.jb2 { --y: 44.300px; }
.insight { flex: none; width: 531px; height: 400px; margin: 43px 0 0 47px; border: 2px solid #f0f2f4; border-radius: 26px; background: #f9fafb; }
.spark { width: 47px; height: 48px; margin: 31px 24px 0 31px; border-radius: 13px; background: #fff; color: #374151; display: flex; align-items: center; justify-content: center; }
.spark .icon { width: 25px; height: 25px; }
.ji { --y: 38.800px; font-size: 24.500px; color: #4b5563; }
.ji1 { --y: 60.600px; }

/* capture button floating over each screen */
.fab { --d: 156px; position: absolute; width: var(--d); z-index: 1; }
.fab::before { content: ""; position: absolute; left: 0; top: 0; width: var(--d); height: var(--d); border-radius: 50%; box-shadow: 0 40px 80px -5px rgba(0, 0, 0, 0.27); }
.disc { position: relative; display: flex; align-items: center; justify-content: center; width: var(--d); height: var(--d); border-radius: 50%; overflow: hidden; background: linear-gradient(135deg, #4a48ec, #93ecd8); color: #f3f7fd; }
.disc::before { content: ""; position: absolute; inset: 0; background: linear-gradient(135deg, rgba(255, 255, 255, 0.3), rgba(255, 255, 255, 0.22)); }
.disc .icon { position: relative; width: 50%; height: 50%; stroke-width: 3; }
.fab .tx { --y: 61px; position: relative; left: -2px; font-size: 26.500px; font-weight: 700; color: #151f2e; }
.fab-a { left: 274px; top: 992px; }
.fab-a .disc::before { left: 24px; top: 25px; background: linear-gradient(45deg, rgba(255, 255, 255, 0.08), rgba(255, 255, 255, 0.22) 50%, rgba(255, 255, 255, 0.12)), linear-gradient(135deg, rgba(255, 255, 255, 0.18), rgba(255, 255, 255, 0.05)); }
.fab-b { left: 276px; top: 996px; }
.fab-b .disc::before, .fab-f .disc::before { display: none; }
.fab-b .disc { background: linear-gradient(rgba(255, 255, 255, 0.27), rgba(255, 255, 255, 0.27)) 0 0 / 91px 91px no-repeat, linear-gradient(rgba(255, 255, 255, 0.25), rgba(255, 255, 255, 0.25)) 91px 91px / 65px 65px no-repeat, linear-gradient(135deg, #4a48ec, #93ecd8); }
.fab-d, .fab-e, .fab-f { --d: 141px; }
.fab-d .tx, .fab-e .tx, .fab-f .tx { --y: 54.500px; font-size: 24px; }
.fab-d { left: 253px; top: 906px; }
.fab-d .disc::before { right: 11px; bottom: 9px; }
.fab-d .icon { color: #d3e0f6; }
.fab-e { left: 251.500px; top: 908px; }
.fab-f { left: 254.500px; top: 908.500px; }
.fab-f .disc { background: linear-gradient(rgba(255, 255, 255, 0.27), rgba(255, 255, 255, 0.27)) 0 0 / 71px 71px no-repeat, linear-gradient(rgba(255, 255, 255, 0.25), rgba(255, 255, 255, 0.25)) 71px 71px / 70px 70px no-repeat, linear-gradient(135deg, #4a48ec, #93ecd8); }
.fab-f .icon, .fab-b .icon { color: #cfdcf6; }
.fab-g { --d: 159px; left: 287px; top: 1026px; }
</style>
